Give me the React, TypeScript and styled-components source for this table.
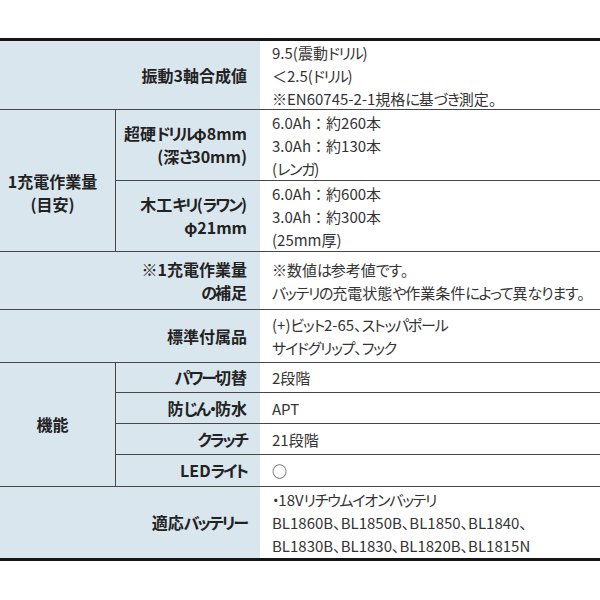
import React from "react";
import styled, { createGlobalStyle } from "styled-components";

const Global = createGlobalStyle`
  html, body { margin: 0; padding: 0; background: #ffffff; }
  body { font-family: "Noto Sans CJK JP", "Noto Sans", sans-serif; font-feature-settings: "palt"; }
`;

const Sheet = styled.div`
  margin-top: 38px;
  width: 600px;
  display: grid;
  grid-template-columns: 116px 144px 1fr;
  grid-template-rows: 69px 71px 71px 58px 53px 30px 31px 31px 32px 71px;
  border-top: 3px solid #151515;
  border-bottom: 3px solid #151515;
`;

const Cell = styled.div<{ $last?: boolean }>`
  box-sizing: border-box;
  display: flex;
  align-items: center;
  line-height: 23px;
  border-bottom: ${(p) => (p.$last ? "none" : "1px solid #474747")};
`;

const GroupLabel = styled(Cell)<{ $span: number; $shift?: number }>`
  grid-column: 1;
  grid-row: span ${(p) => p.$span};
  justify-content: center;
  text-align: center;
  padding-right: 10px;
  padding-top: ${(p) => p.$shift ?? 0}px;
  background: #dae6ee;
  border-right: 1px solid #474747;
  font-size: 16px;
  font-weight: 700;
  color: #222;
`;

const ItemLabel = styled(Cell)<{ $wide?: boolean }>`
  grid-column: ${(p) => (p.$wide ? "1 / span 2" : "2")};
  justify-content: flex-end;
  text-align: right;
  padding-right: 13px;
  background: #dae6ee;
  font-size: 16px;
  font-weight: 700;
  color: #222;
`;

const Value = styled(Cell)`
  grid-column: 3;
  padding-left: 12px;
  background: #ffffff;
  font-size: 15px;
  color: #333;
  white-space: nowrap;
`;

const Colon = styled.span`
  font-feature-settings: normal;
  letter-spacing: 0;
`;

const Kana = styled.span<{ $ls: number }>`
  letter-spacing: ${(p) => p.$ls}px;
`;

const KANA = /([\u3041-\u309f\u30a0-\u30ff]+)/;

function Fit({ text, ls }: { text: string; ls: number }) {
  const parts = text.split(KANA);
  return (
    <>
      {parts.map((part, i) =>
        i % 2 === 1 ? (
          <Kana key={i} $ls={ls}>
            {part}
          </Kana>
        ) : part.includes("：") ? (
          <React.Fragment key={i}>
            {part.split("：").map((s, j) => (
              <React.Fragment key={j}>
                {j > 0 && <Colon>：</Colon>}
                {s}
              </React.Fragment>
            ))}
          </React.Fragment>
        ) : (
          <React.Fragment key={i}>{part}</React.Fragment>
        )
      )}
    </>
  );
}

function Lines({ lines, ls }: { lines: string[]; ls: number }) {
  return (
    <div>
      {lines.map((line, i) => (
        <React.Fragment key={i}>
          {i > 0 && <br />}
          <Fit text={line} ls={ls} />
        </React.Fragment>
      ))}
    </div>
  );
}

const L = -2;
const V = -1.2;

export default function App() {
  return (
    <>
      <Global />
      <Sheet>
        <ItemLabel $wide>
          <Lines lines={["振動3軸合成値"]} ls={L} />
        </ItemLabel>
        <Value>
          <Lines
            lines={["9.5(震動ドリル)", "＜2.5(ドリル)", "※EN60745-2-1規格に基づき測定。"]}
            ls={V}
          />
        </Value>

        <GroupLabel $span={2} $shift={24}>
          <Lines lines={["1充電作業量", "(目安)"]} ls={L} />
        </GroupLabel>
        <ItemLabel>
          <Lines lines={["超硬ドリルφ8mm", "(深さ30mm)"]} ls={L} />
        </ItemLabel>
        <Value>
          <Lines lines={["6.0Ah：約260本", "3.0Ah：約130本", "(レンガ)"]} ls={V} />
        </Value>
        <ItemLabel>
          <Lines lines={["木工キリ(ラワン)", "φ21mm"]} ls={L} />
        </ItemLabel>
        <Value>
          <Lines lines={["6.0Ah：約600本", "3.0Ah：約300本", "(25mm厚)"]} ls={V} />
        </Value>

        <ItemLabel $wide>
          <Lines lines={["※1充電作業量", "の補足"]} ls={L} />
        </ItemLabel>
        <Value>
          <Lines
            lines={["※数値は参考値です。", "バッテリの充電状態や作業条件によって異なります。"]}
            ls={V}
          />
        </Value>

        <ItemLabel $wide>
          <Lines lines={["標準付属品"]} ls={L} />
        </ItemLabel>
        <Value>
          <Lines lines={["(+)ビット2-65、ストッパポール", "サイドグリップ、フック"]} ls={V} />
        </Value>

        <GroupLabel $span={4}>
          <Lines lines={["機能"]} ls={L} />
        </GroupLabel>
        <ItemLabel>
          <Lines lines={["パワー切替"]} ls={L} />
        </ItemLabel>
        <Value>
          <Lines lines={["2段階"]} ls={V} />
        </Value>
        <ItemLabel>
          <Lines lines={["防じん・防水"]} ls={L} />
        </ItemLabel>
        <Value>
          <Lines lines={["APT"]} ls={V} />
        </Value>
        <ItemLabel>
          <Lines lines={["クラッチ"]} ls={L} />
        </ItemLabel>
        <Value>
          <Lines lines={["21段階"]} ls={V} />
        </Value>
        <ItemLabel>
          <Lines lines={["LEDライト"]} ls={L} />
        </ItemLabel>
        <Value>○</Value>

        <ItemLabel $wide $last>
          <Lines lines={["適応バッテリー"]} ls={L} />
        </ItemLabel>
        <Value $last>
          <Lines
            lines={[
              "・18Vリチウムイオンバッテリ",
              "BL1860B、BL1850B、BL1850、BL1840、",
              "BL1830B、BL1830、BL1820B、BL1815N",
            ]}
            ls={V}
          />
        </Value>
      </Sheet>
    </>
  );
}
